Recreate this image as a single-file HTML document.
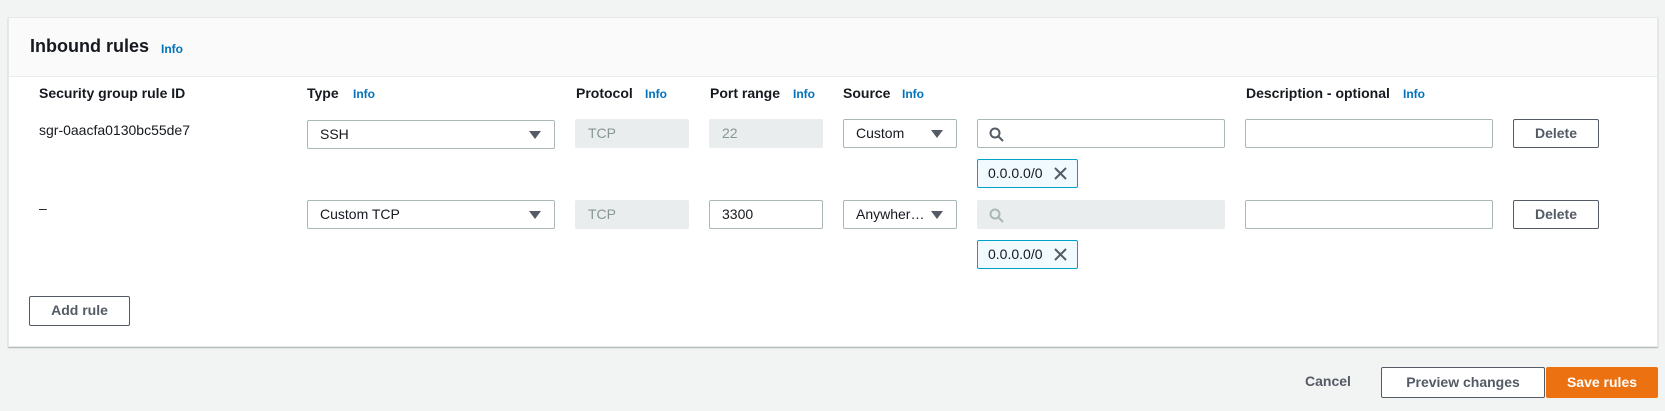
<!DOCTYPE html>
<html><head><meta charset="utf-8"><style>
*{box-sizing:border-box;margin:0;padding:0}
body{width:1665px;height:411px;background:#f2f3f3;font-family:"Liberation Sans",sans-serif;font-size:14px;color:#16191f;position:relative;overflow:hidden}
.a{position:absolute}
.panel{left:8px;top:17px;width:1650px;height:330px;background:#fff;border:1px solid #e6e9e9;box-shadow:0 1px 1px rgba(0,28,36,.3)}
.hdr{left:9px;top:18px;width:1648px;height:59px;background:#fafafa;border-bottom:1px solid #eaeded}
.lbl{font-weight:bold;font-size:14px;top:85px}
.info{color:#0073bb;font-weight:bold;font-size:12px}
.inp{height:29px;border:1px solid #aab7b8;border-radius:2px;background:#fff;padding-left:12px;line-height:27px}
.dis{background:#eaeded;border-color:#eaeded;color:#879596}
.arr{position:absolute;right:13px;top:10px;width:0;height:0;border-left:6px solid transparent;border-right:6px solid transparent;border-top:8px solid #545b64}
.btn{height:29px;border:1px solid #545b64;border-radius:2px;background:#fff;font-weight:bold;color:#545b64;text-align:center;line-height:27px}
.tok{height:29px;border:1px solid #00a1c9;border-radius:2px;background:#f1faff;padding-left:10px;line-height:27px;width:101px}
.x{position:absolute;right:9px;top:6px}
</style></head><body>
<div class="a panel"></div>
<div class="a hdr"></div>
<div class="a" style="left:30px;top:36px;font-size:18px;font-weight:bold">Inbound rules</div>
<div class="a info" style="left:161px;top:42px">Info</div>

<div class="a lbl" style="left:39px">Security group rule ID</div>
<div class="a lbl" style="left:307px">Type</div><div class="a info" style="left:353px;top:87px">Info</div>
<div class="a lbl" style="left:576px">Protocol</div><div class="a info" style="left:645px;top:87px">Info</div>
<div class="a lbl" style="left:710px">Port range</div><div class="a info" style="left:793px;top:87px">Info</div>
<div class="a lbl" style="left:843px">Source</div><div class="a info" style="left:902px;top:87px">Info</div>
<div class="a lbl" style="left:1246px">Description - optional</div><div class="a info" style="left:1403px;top:87px">Info</div>

<div class="a" style="left:39px;top:122px">sgr-0aacfa0130bc55de7</div>
<div class="a inp" style="left:307px;top:120px;width:248px">SSH<span class="arr"></span></div>
<div class="a inp dis" style="left:575px;top:119px;width:114px">TCP</div>
<div class="a inp dis" style="left:709px;top:119px;width:114px">22</div>
<div class="a inp" style="left:843px;top:119px;width:114px">Custom<span class="arr"></span></div>
<div class="a inp" style="left:977px;top:119px;width:248px"><svg class="a" style="left:11px;top:7px" width="15" height="15" viewBox="0 0 15 15"><circle cx="6" cy="6" r="4.5" fill="none" stroke="#545b64" stroke-width="2"/><path d="M9.5 9.5L14 14" stroke="#545b64" stroke-width="2"/></svg></div>
<div class="a inp" style="left:1245px;top:119px;width:248px"></div>
<div class="a btn" style="left:1513px;top:119px;width:86px">Delete</div>
<div class="a tok" style="left:977px;top:159px">0.0.0.0/0<svg class="x" width="15" height="15" viewBox="0 0 15 15"><path d="M2 2L13 13M13 2L2 13" stroke="#545b64" stroke-width="2"/></svg></div>

<div class="a" style="left:39px;top:200px">–</div>
<div class="a inp" style="left:307px;top:200px;width:248px">Custom TCP<span class="arr"></span></div>
<div class="a inp dis" style="left:575px;top:200px;width:114px">TCP</div>
<div class="a inp" style="left:709px;top:200px;width:114px">3300</div>
<div class="a inp" style="left:843px;top:200px;width:114px">Anywher…<span class="arr"></span></div>
<div class="a inp dis" style="left:977px;top:200px;width:248px"><svg class="a" style="left:11px;top:7px" width="15" height="15" viewBox="0 0 15 15"><circle cx="6" cy="6" r="4.5" fill="none" stroke="#aab7b8" stroke-width="2"/><path d="M9.5 9.5L14 14" stroke="#aab7b8" stroke-width="2"/></svg></div>
<div class="a inp" style="left:1245px;top:200px;width:248px"></div>
<div class="a btn" style="left:1513px;top:200px;width:86px">Delete</div>
<div class="a tok" style="left:977px;top:240px">0.0.0.0/0<svg class="x" width="15" height="15" viewBox="0 0 15 15"><path d="M2 2L13 13M13 2L2 13" stroke="#545b64" stroke-width="2"/></svg></div>

<div class="a btn" style="left:29px;top:296px;width:101px;height:30px">Add rule</div>

<div class="a" style="left:1305px;top:373px;font-weight:bold;color:#545b64">Cancel</div>
<div class="a btn" style="left:1381px;top:367px;width:164px;height:31px;line-height:29px">Preview changes</div>
<div class="a btn" style="left:1546px;top:367px;width:112px;height:31px;line-height:29px;background:#ec7211;border-color:#ec7211;color:#fff">Save rules</div>
</body></html>
